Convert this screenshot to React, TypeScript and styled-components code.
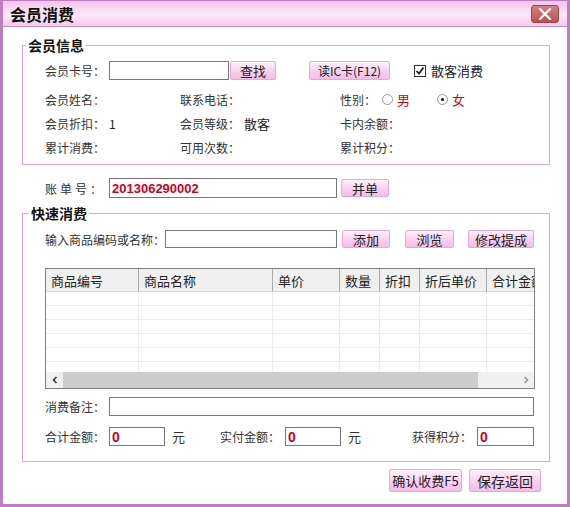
import React from "react";
import styled, { createGlobalStyle } from "styled-components";

const GlobalStyle = createGlobalStyle`
  html, body { margin: 0; padding: 0; background: #ffffff; }
  body { font-family: "Noto Sans CJK SC", "Liberation Sans", sans-serif; font-size: 12px; color: #222; }
  * { box-sizing: border-box; }
`;

const Window = styled.div`
  width: 570px;
  height: 507px;
  border: 3px solid #c07cc0;
  border-top-width: 1px;
  background: #fff;
  display: flex;
  flex-direction: column;
`;

const TitleBar = styled.div`
  height: 26px;
  flex: none;
  display: flex;
  align-items: center;
  justify-content: space-between;
  padding: 0 8px 0 7px;
  background: linear-gradient(#f2c4ea, #fde8f9 55%, #f4cbee);
  border-bottom: 1px solid #c88cc8;
`;

const Title = styled.div`
  font-size: 16px;
  font-weight: bold;
  color: #111;
  line-height: 20px;
`;

const CloseButton = styled.div`
  width: 28px;
  height: 18px;
  border-radius: 3px;
  background: linear-gradient(#d88080, #b85454);
  border: 1px solid #a04848;
  display: flex;
  align-items: center;
  justify-content: center;
`;

const Body = styled.div`
  flex: 1;
  display: flex;
  flex-direction: column;
  padding: 18px 17px 0 19px;
`;

const Group = styled.div<{ $h: number }>`
  position: relative;
  height: ${(p) => p.$h}px;
  border: 1px solid #e0a4dc;
  padding-left: 22px;
  display: flex;
  flex-direction: column;
`;

const Legend = styled.div<{ $left: number }>`
  position: absolute;
  top: -10px;
  left: ${(p) => p.$left}px;
  background: #fff;
  padding: 0 2px;
  font-size: 14px;
  font-weight: bold;
  line-height: 18px;
  color: #111;
`;

const Row = styled.div<{ $mt?: number; $h?: number }>`
  display: flex;
  align-items: center;
  margin-top: ${(p) => p.$mt ?? 0}px;
  height: ${(p) => p.$h ?? 20}px;
  flex: none;
`;

const InfoRow = styled.div<{ $mt?: number }>`
  display: grid;
  grid-template-columns: 135px 160px 1fr;
  height: 24px;
  align-items: center;
  margin-top: ${(p) => p.$mt ?? 0}px;
`;

const Cell = styled.div`
  display: flex;
  align-items: center;
`;

const Label = styled.span<{ $w?: number; $ls?: number }>`
  display: inline-block;
  width: ${(p) => (p.$w ? `${p.$w}px` : "auto")};
  letter-spacing: ${(p) => p.$ls ?? 0}px;
  color: #333;
  white-space: nowrap;
  flex: none;
`;

const Value = styled.span`
  color: #222;
`;

const Input = styled.div<{ $w: number; $h?: number }>`
  width: ${(p) => p.$w}px;
  height: ${(p) => p.$h ?? 19}px;
  border: 1px solid #777;
  background: #fff;
  flex: none;
  display: flex;
  align-items: center;
  padding-left: 2px;
`;

const RedText = styled.span<{ $size?: number }>`
  color: #d0001a;
  font-weight: bold;
  font-family: "Liberation Sans", "Noto Sans CJK SC", sans-serif;
  font-size: ${(p) => p.$size ?? 13}px;
`;

const Button = styled.div<{ $w: number; $h?: number; $ml?: number; $fs?: number }>`
  width: ${(p) => p.$w}px;
  height: ${(p) => p.$h ?? 19}px;
  margin-left: ${(p) => p.$ml ?? 0}px;
  flex: none;
  display: flex;
  align-items: center;
  justify-content: center;
  border: 1px solid #e6a8da;
  border-radius: 2px;
  background: linear-gradient(#fdf2fb, #f8cdee 60%, #f4bde6);
  font-size: ${(p) => p.$fs ?? 13}px;
  color: #222;
  white-space: nowrap;
`;

const CheckBox = styled.div`
  width: 12px;
  height: 12px;
  border: 1px solid #333;
  background: #fff;
  display: flex;
  align-items: center;
  justify-content: center;
  margin-right: 5px;
  flex: none;
`;

const Radio = styled.div<{ $on?: boolean }>`
  width: 11px;
  height: 11px;
  border-radius: 50%;
  border: 1px solid #999;
  background: #fff;
  display: flex;
  align-items: center;
  justify-content: center;
  margin-right: 4px;
  flex: none;
  &::after {
    content: "";
    display: ${(p) => (p.$on ? "block" : "none")};
    width: 3px;
    height: 3px;
    border-radius: 50%;
    background: #111;
  }
`;

const RadioText = styled.span<{ $w?: number }>`
  color: #d00010;
  font-size: 13px;
  width: ${(p) => (p.$w ? `${p.$w}px` : "auto")};
  display: inline-block;
`;

const BillRow = styled.div`
  display: flex;
  align-items: center;
  height: 20px;
  margin: 13px 0 15px 23px;
  flex: none;
`;

const Table = styled.div`
  margin-top: 20px;
  width: 490px;
  height: 121px;
  border: 1px solid #808080;
  display: flex;
  flex-direction: column;
  overflow: hidden;
  flex: none;
`;

const HeaderRow = styled.div`
  display: flex;
  height: 23px;
  flex: none;
  background: #f0f0f0;
  border-bottom: 1px solid #d8d8d8;
`;

const HeaderCell = styled.div<{ $w: number }>`
  width: ${(p) => p.$w}px;
  flex: none;
  border-right: 1px solid #a8a8a8;
  padding-left: 5px;
  display: flex;
  align-items: center;
  font-size: 13px;
  color: #222;
  white-space: nowrap;
  overflow: hidden;
`;

const GridBody = styled.div`
  flex: 1;
  overflow: hidden;
`;

const DataRow = styled.div`
  display: flex;
  height: 14px;
  border-bottom: 1px solid #ececec;
`;

const DataCell = styled.div<{ $w: number }>`
  width: ${(p) => p.$w}px;
  flex: none;
  border-right: 1px solid #ececec;
`;

const ScrollBar = styled.div`
  height: 16px;
  flex: none;
  display: flex;
  background: #f0f0f0;
`;

const ScrollArrow = styled.div`
  width: 17px;
  flex: none;
  display: flex;
  align-items: center;
  justify-content: center;
`;

const ScrollThumb = styled.div`
  width: 415px;
  flex: none;
  background: #cdcdcd;
  margin: 0 0;
`;

const ScrollTrack = styled.div`
  flex: 1;
`;

const Unit = styled.span<{ $w: number }>`
  display: inline-block;
  width: ${(p) => p.$w}px;
  padding-left: 7px;
  font-size: 13px;
  color: #333;
  flex: none;
`;

const Footer = styled.div`
  display: flex;
  justify-content: flex-end;
  margin-top: 7px;
  padding-right: 9px;
  gap: 7px;
`;

const cols = [93, 134, 67, 40, 40, 67, 90];
const headers = ["商品编号", "商品名称", "单价", "数量", "折扣", "折后单价", "合计金额"];

export default function App() {
  return (
    <>
      <GlobalStyle />
      <Window>
        <TitleBar>
          <Title>会员消费</Title>
          <CloseButton>
            <svg width="16" height="12" viewBox="0 0 16 12">
              <path d="M3 1 L13 11 M13 1 L3 11" stroke="#fff" strokeWidth="2.2" strokeLinecap="round" />
            </svg>
          </CloseButton>
        </TitleBar>
        <Body>
          <Group $h={120}>
            <Legend $left={3}>会员信息</Legend>
            <Row $mt={15} $h={19}>
              <Label $w={64}>会员卡号：</Label>
              <Input $w={120} />
              <Button $w={46} $ml={1}>查找</Button>
              <Button $w={81} $ml={33} $fs={12}>读IC卡(F12)</Button>
              <Cell style={{ marginLeft: 24 }}>
                <CheckBox>
                  <svg width="10" height="10" viewBox="0 0 10 10">
                    <path d="M1.5 5 L4 7.5 L8.5 1.5" stroke="#111" strokeWidth="1.6" fill="none" />
                  </svg>
                </CheckBox>
                <Value style={{ fontSize: 13 }}>散客消费</Value>
              </Cell>
            </Row>
            <InfoRow $mt={7}>
              <Cell><Label>会员姓名：</Label></Cell>
              <Cell><Label>联系电话：</Label></Cell>
              <Cell>
                <Label $w={42}>性别：</Label>
                <Radio />
                <RadioText $w={40}>男</RadioText>
                <Radio $on />
                <RadioText>女</RadioText>
              </Cell>
            </InfoRow>
            <InfoRow>
              <Cell><Label $w={64}>会员折扣：</Label><Value>1</Value></Cell>
              <Cell><Label $w={64}>会员等级：</Label><Value style={{ fontSize: 13 }}>散客</Value></Cell>
              <Cell><Label>卡内余额：</Label></Cell>
            </InfoRow>
            <InfoRow>
              <Cell><Label>累计消费：</Label></Cell>
              <Cell><Label>可用次数：</Label></Cell>
              <Cell><Label>累计积分：</Label></Cell>
            </InfoRow>
          </Group>

          <BillRow>
            <Label $w={64} $ls={3}>账单号：</Label>
            <Input $w={228} $h={20}>
              <RedText>201306290002</RedText>
            </Input>
            <Button $w={48} $h={18} $ml={4}>并单</Button>
          </BillRow>

          <Group $h={249}>
            <Legend $left={6}>快速消费</Legend>
            <Row $mt={16} $h={18}>
              <Label $w={120}>输入商品编码或名称：</Label>
              <Input $w={172} $h={18} />
              <Button $w={48} $h={18} $ml={5}>添加</Button>
              <Button $w={49} $h={18} $ml={15}>浏览</Button>
              <Button $w={66} $h={18} $ml={14}>修改提成</Button>
            </Row>
            <Table>
              <HeaderRow>
                {headers.map((h, i) => (
                  <HeaderCell key={h} $w={cols[i]}>{h}</HeaderCell>
                ))}
              </HeaderRow>
              <GridBody>
                {[0, 1, 2, 3, 4, 5].map((r) => (
                  <DataRow key={r}>
                    {cols.map((w, i) => (
                      <DataCell key={i} $w={w} />
                    ))}
                  </DataRow>
                ))}
              </GridBody>
              <ScrollBar>
                <ScrollArrow>
                  <svg width="8" height="8" viewBox="0 0 8 8">
                    <path d="M5.5 1 L2.5 4 L5.5 7" stroke="#333" strokeWidth="1.6" fill="none" />
                  </svg>
                </ScrollArrow>
                <ScrollThumb />
                <ScrollTrack />
                <ScrollArrow>
                  <svg width="8" height="8" viewBox="0 0 8 8">
                    <path d="M2.5 1 L5.5 4 L2.5 7" stroke="#999" strokeWidth="1.6" fill="none" />
                  </svg>
                </ScrollArrow>
              </ScrollBar>
            </Table>
            <Row $mt={8} $h={19}>
              <Label $w={64}>消费备注：</Label>
              <Input $w={425} />
            </Row>
            <Row $mt={11} $h={19}>
              <Label $w={64}>合计金额：</Label>
              <Input $w={56}><RedText $size={14}>0</RedText></Input>
              <Unit $w={55}>元</Unit>
              <Label $w={65}>实付金额：</Label>
              <Input $w={56}><RedText $size={14}>0</RedText></Input>
              <Unit $w={71}>元</Unit>
              <Label $w={65}>获得积分：</Label>
              <Input $w={57}><RedText $size={14}>0</RedText></Input>
            </Row>
          </Group>

          <Footer>
            <Button $w={73} $h={23}>确认收费F5</Button>
            <Button $w={72} $h={23} $fs={14}>保存返回</Button>
          </Footer>
        </Body>
      </Window>
    </>
  );
}
